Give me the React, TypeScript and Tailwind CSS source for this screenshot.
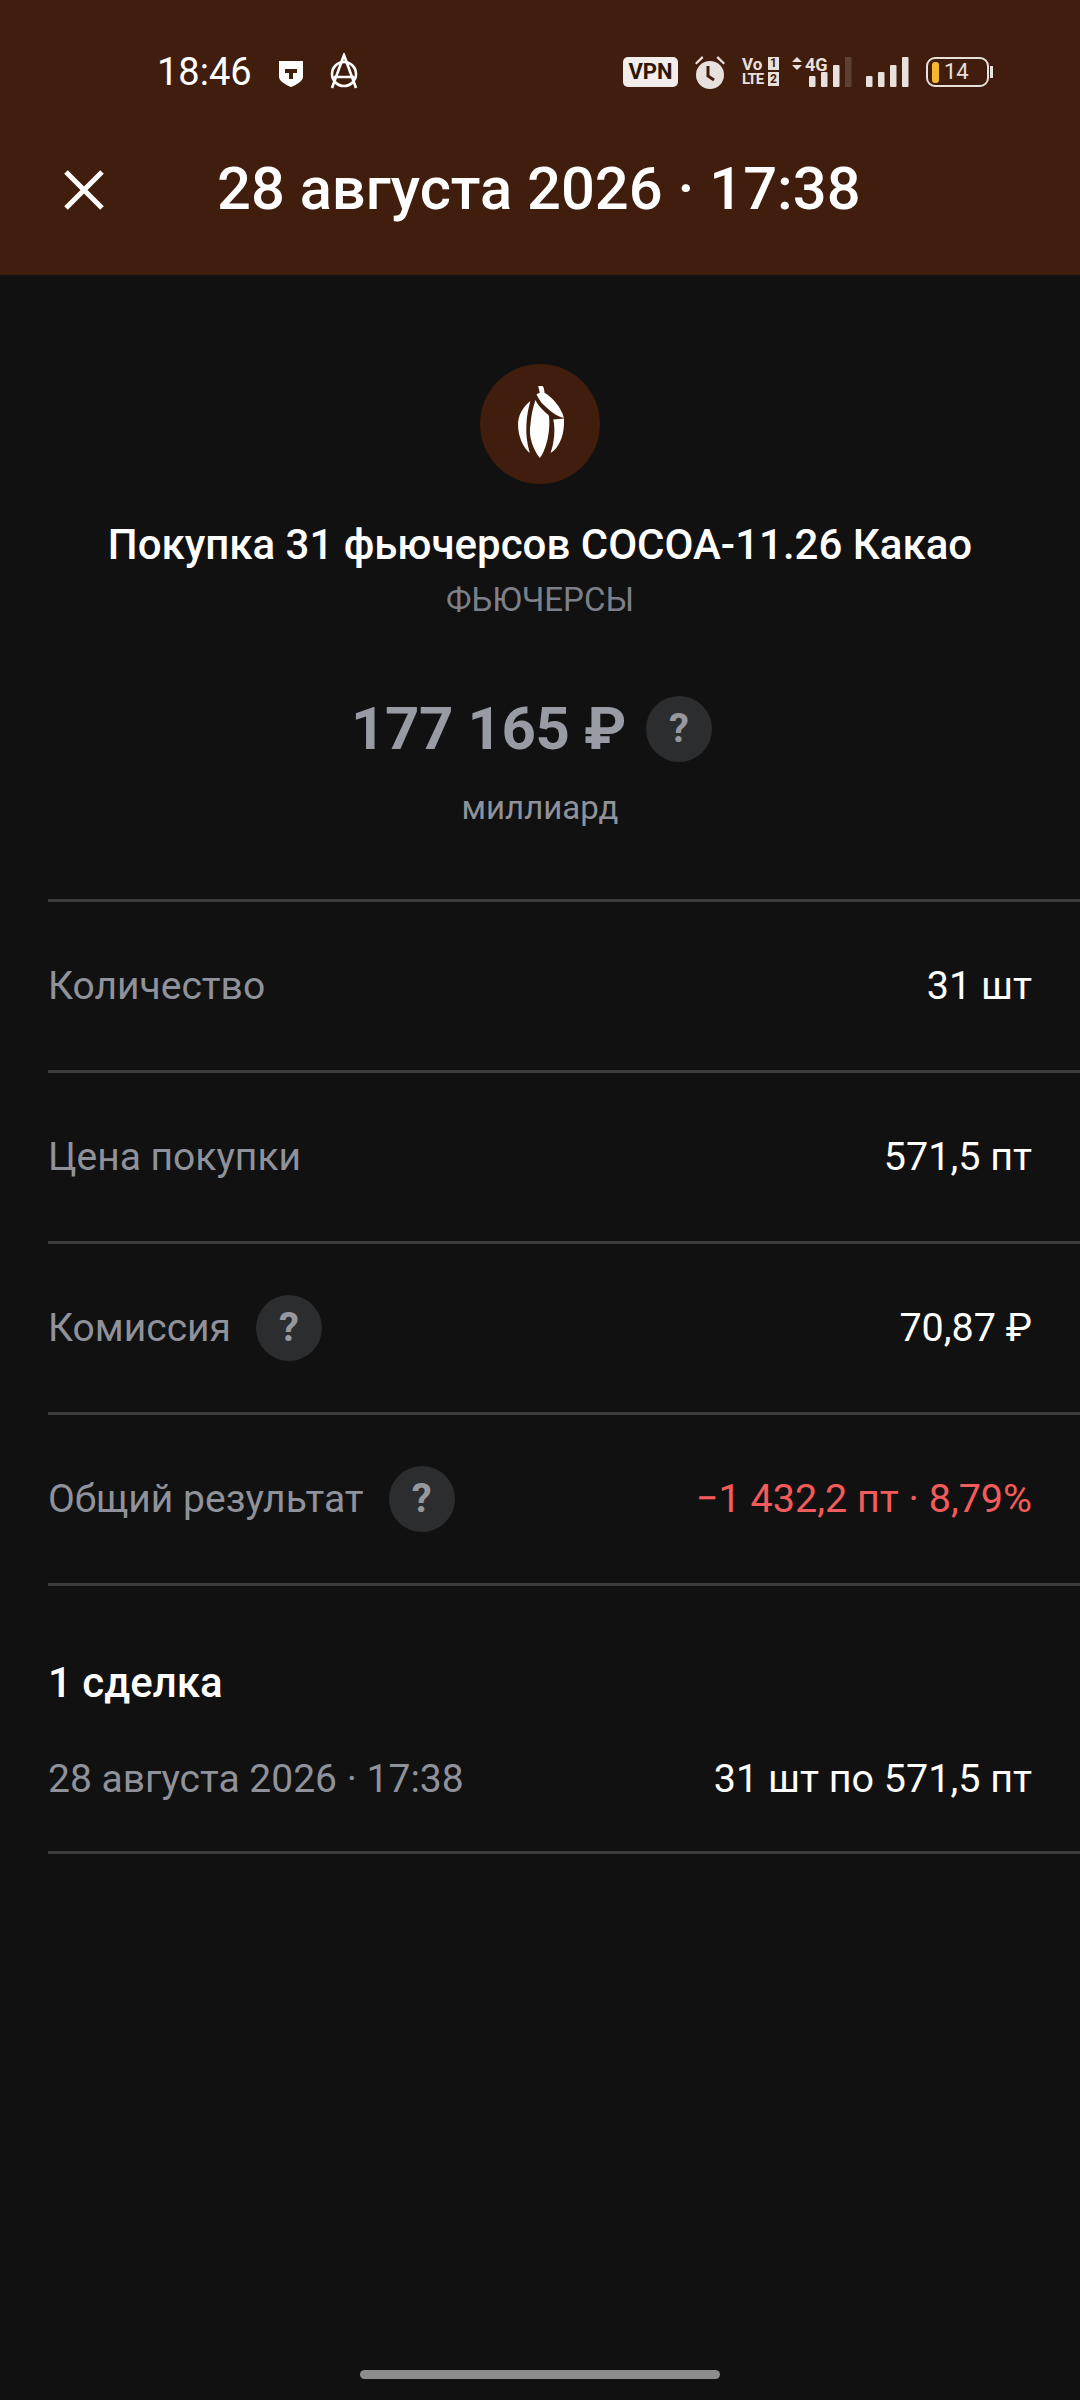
const font = "font-['Roboto','Liberation_Sans',sans-serif]";

function Help({ size = "w-[66px] h-[66px]" }: { size?: string }) {
  return (
    <span className={`${size} rounded-full bg-[#2c2d2f] flex items-center justify-center text-[#96989e] text-[40px] leading-none font-bold`}>?</span>
  );
}

function Row({ label, value, help, red }: { label: string; value: string; help?: boolean; red?: boolean }) {
  return (
    <div className="h-[171px] pr-[48px] border-b-[3px] border-[#3c3c3c] flex items-center justify-between">
      <div className="flex items-center gap-[25px]">
        <span className="text-[39px] text-[#8f929a]">{label}</span>
        {help && <Help />}
      </div>
      <span className={`text-[39.5px] ${red ? "text-[#f45b5b]" : "text-white"}`}>{value}</span>
    </div>
  );
}

function Bars() {
  return (
    <svg width="43" height="30" viewBox="0 0 43 30" fill="#e8e0dc">
      <rect x="0" y="19" width="6.5" height="11" rx="1" />
      <rect x="12" y="15" width="6.5" height="15" rx="1" />
      <rect x="24" y="8" width="6.5" height="22" rx="1" />
      <rect x="36" y="0" width="6.5" height="30" rx="1" />
    </svg>
  );
}

export default function App() {
  return (
    <div className={`${font} w-[1080px] h-[2400px] bg-[#111111] flex flex-col relative overflow-hidden`}>
      <div className="h-[275px] bg-[#401d0c] flex flex-col">
        <div className="h-[100px] pt-[54px] pl-[157px] pr-[87px] flex items-start justify-between text-white">
          <div className="flex items-center h-[36px]">
            <span className="text-[38px] leading-[36px]">18:46</span>
            <svg width="26" height="28" viewBox="0 0 26 28" className="ml-[26px] mt-[4px]">
              <path d="M1 1h24v16c0 4-7 8-12 10C8 25 1 21 1 17z" fill="#fff" />
              <path d="M7 9h12v4h-4v6h-4v-6H7z" fill="#401d0c" />
            </svg>
            <svg width="34" height="38" viewBox="0 0 34 38" fill="none" stroke="#fff" strokeWidth="2.6" className="ml-[23px]">
              <circle cx="17" cy="21" r="12" />
              <path d="M5 35 17 2l12 33M7 24h20" />
            </svg>
          </div>
          <div className="flex items-center h-[36px]">
            <span className="bg-[#f2ecea] text-[#2e1508] rounded-[5px] w-[55px] h-[30px] text-[22px] leading-[30px] font-bold text-center">VPN</span>
            <svg width="34" height="36" viewBox="0 0 34 36" fill="#e8e0dc" className="ml-[15px]">
              <circle cx="17" cy="21" r="14" />
              <path d="M15 12v10l6 4" stroke="#401d0c" strokeWidth="3" fill="none" />
              <path d="M2 9l7-7 1.5 2-7 6.5zM32 9l-7-7-1.5 2 7 6.5z" />
            </svg>
            <div className="ml-[15px] w-[37px] h-[30px] flex flex-col text-[#e8e0dc] font-bold">
              <div className="flex justify-between h-[15px] text-[17px] leading-[15px]">
                <span>Vo</span>
                <span className="bg-[#e8e0dc] text-[#401d0c] w-[11px] h-[13px] text-center text-[12px] leading-[13px]">1</span>
              </div>
              <div className="flex justify-between h-[15px] text-[15px] leading-[15px] tracking-[-1px]">
                <span>LTE</span>
                <span className="bg-[#e8e0dc] text-[#401d0c] w-[11px] h-[14px] text-center text-[12px] leading-[14px] tracking-normal">2</span>
              </div>
            </div>
            <div className="ml-[13px] relative w-[60px] h-[30px]">
              <svg width="60" height="30" viewBox="0 0 60 30" fill="#e8e0dc">
                <path d="M5 0l5 5H0zM5 13l5-5H0z" />
                <rect x="17" y="19" width="6.5" height="11" rx="1" />
                <rect x="29" y="15" width="6.5" height="15" rx="1" />
                <rect x="41" y="8" width="6.5" height="22" rx="1" />
                <rect x="53" y="0" width="6.5" height="30" rx="1" fill="#5e4030" />
              </svg>
              <span className="absolute left-[13px] top-0 text-[18px] leading-[16px] font-bold text-[#e8e0dc]">4G</span>
            </div>
            <div className="ml-[14px]"><Bars /></div>
            <div className="ml-[17px] flex items-center">
              <div className="w-[63px] h-[30px] rounded-[9px] border-2 border-[#e8e0dc] flex items-center pl-[4px]">
                <div className="w-[7px] h-[21px] bg-[#f5b82e] rounded-[3px]" />
                <span className="text-[22px] leading-[22px] ml-[5px] text-[#e8e0dc]">14</span>
              </div>
              <div className="w-[3px] h-[12px] bg-[#e8e0dc] ml-[1px]" />
            </div>
          </div>
        </div>
        <div className="flex items-center h-[90px] mt-[45px] pl-[63px]">
          <svg width="42" height="42" viewBox="0 0 42 42" stroke="#fff" strokeWidth="5"><path d="M3 3l36 36M39 3 3 39" /></svg>
          <span className="ml-[112px] text-[59.7px] font-medium text-white">28 августа 2026 · 17:38</span>
        </div>
      </div>

      <div className="flex flex-col items-center pt-[89px]">
        <div className="w-[120px] h-[120px] rounded-full bg-[#401d0c] flex items-center justify-center">
          <svg width="46" height="72" viewBox="0 0 137 215" fill="#fff" className="ml-[2px] mt-[-4px]">
            <path d="M37 45C12 65 0 90 0 115c0 35 15 70 35 85-8-28-12-55-10-85 1-25 6-50 12-70z" />
            <path d="M52 42c8 18 26 34 40 46 6 42-7 102-27 127-20-25-35-65-28-100 2-25 7-50 15-73z" />
            <path d="M60 0h13c4 2 5 12 6 20 26 15 50 45 58 75-22-3-47-25-67-45-7-9-12-18-15-25l10-5z" />
            <path d="M105 100l32-3c3 43-12 88-40 103 11-30 15-70 8-100z" />
          </svg>
        </div>
        <div className="mt-[37px] text-[42px] leading-[48px] font-medium text-white">Покупка 31 фьючерсов COCOA-11.26 Какао</div>
        <div className="mt-[11px] text-[33px] leading-[40px] text-[#7d8088]">ФЬЮЧЕРСЫ</div>
        <div className="mt-[76px] mr-[17px] flex items-center gap-[20px]">
          <span className="text-[60px] leading-[66px] font-bold tracking-[-0.4px] text-[#989ba4]">177 165 ₽</span>
          <Help />
        </div>
        <div className="mt-[26px] text-[33px] leading-[40px] text-[#8f929a]">миллиард</div>
      </div>

      <div className="pl-[48px] mt-[71px] flex flex-col">
        <div className="border-t-[3px] border-[#3c3c3c]" />
        <Row label="Количество" value="31 шт" />
        <Row label="Цена покупки" value="571,5 пт" />
        <Row label="Комиссия" value="70,87 ₽" help />
        <Row label="Общий результат" value="−1 432,2 пт · 8,79%" help red />
        <div className="mt-[73px] text-[42px] leading-[48px] font-medium text-white">1 сделка</div>
        <div className="h-[147px] pr-[48px] border-b-[3px] border-[#3c3c3c] flex items-center justify-between">
          <span className="text-[39px] text-[#8f929a]">28 августа 2026 · 17:38</span>
          <span className="text-[39.5px] text-white">31 шт по 571,5 пт</span>
        </div>
      </div>

      <div className="absolute bottom-[21px] left-[360px] w-[360px] h-[9px] rounded-full bg-[#8c8c8c]" />
    </div>
  );
}
